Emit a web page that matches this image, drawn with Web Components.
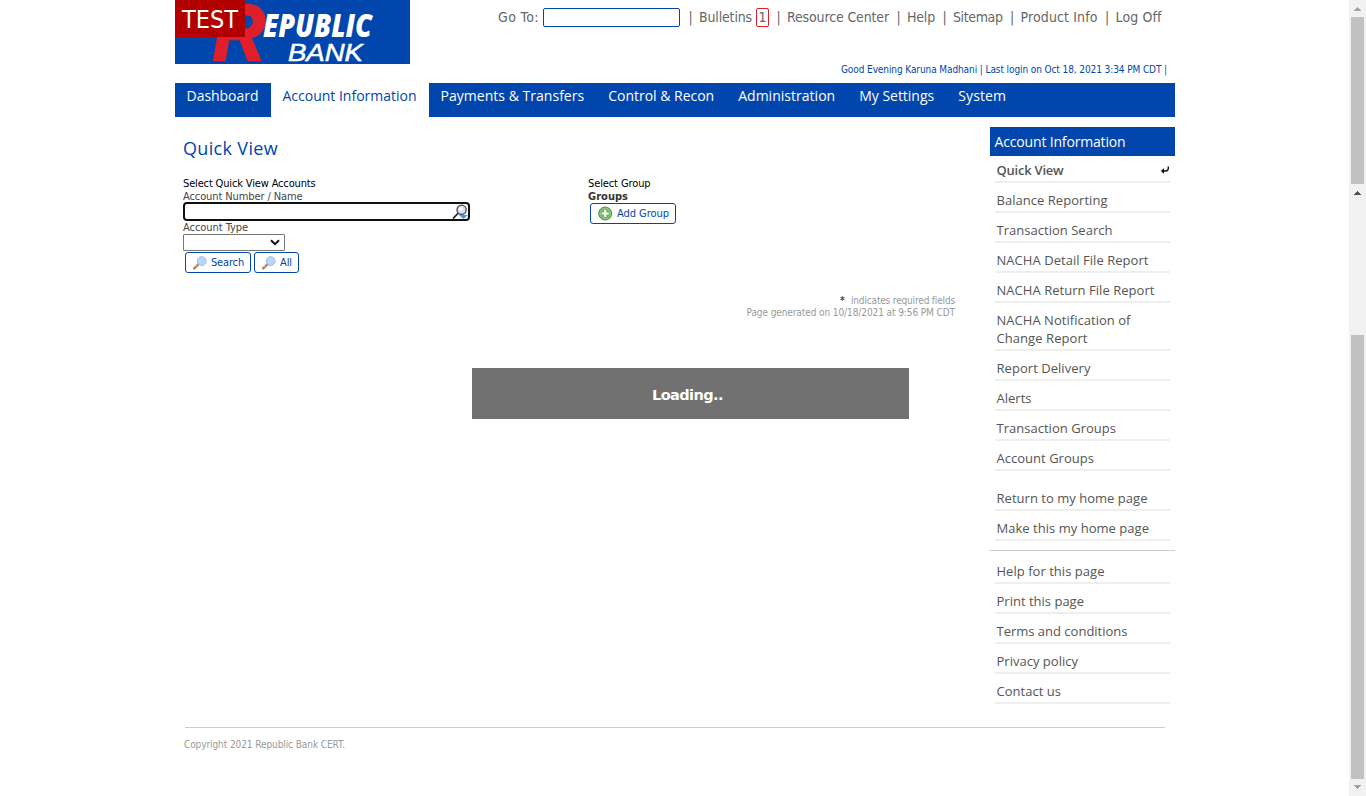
<!DOCTYPE html>
<html lang="en">
<head>
<meta charset="utf-8">
<title>Quick View</title>
<style>
html,body{margin:0;height:796px;overflow:hidden;background:#fff}
body{font-family:"DejaVu Sans Condensed","DejaVu Sans",sans-serif}
</style>
</head>
<body>
<bank-app></bank-app>
<script>
const define=(name,html,after)=>customElements.define(name,class extends HTMLElement{
  constructor(){super();this.attachShadow({mode:'open'}).innerHTML=html;}
  connectedCallback(){if(after)after(this,this.shadowRoot);}
});

/* One line of text tracked to a given width */
define('fit-text',`<style>:host{display:block;white-space:nowrap}span{display:inline-block}</style><span><slot></slot></span>`,(h,r)=>{
  const s=r.querySelector('span'),w=+h.getAttribute('w'),n=h.textContent.length;
  h.style.width=w+'px';
  s.style.letterSpacing=((w-s.getBoundingClientRect().width)/n)+'px';
});

define('bank-logo',`<style>:host{display:block;width:235px;height:64px}svg{display:block;overflow:visible}</style>
<svg width="235" height="64" viewBox="0 0 235 64">
<rect width="235" height="64" fill="#0046ad"/>
<text x="38" y="60" font-family="Liberation Sans" font-weight="bold" font-style="italic" font-size="79" fill="#e01f2b" stroke="#e01f2b" stroke-width="2.5" textLength="52" lengthAdjust="spacingAndGlyphs">R</text>
<g fill="#fff" font-style="italic">
<text x="88" y="37" font-family="Open Sans" font-weight="800" font-size="31" textLength="109" lengthAdjust="spacingAndGlyphs">EPUBLIC</text>
<text x="113" y="61" font-family="Liberation Sans" font-size="23" stroke="#fff" stroke-width=".5" textLength="75" lengthAdjust="spacingAndGlyphs">BANK</text></g>
<rect width="70" height="37" fill="#b20000"/>
<text x="7" y="28" font-family="DejaVu Sans Condensed" font-size="24" fill="#fff" textLength="56" lengthAdjust="spacingAndGlyphs">TEST</text>
</svg>`);

define('top-links',`<style>
:host{display:flex;align-items:center;height:22px;font-size:14px;line-height:22px;color:#666}
.f{box-sizing:border-box;width:137px;height:19px;border:1px solid #0046ad;border-radius:2px;margin:0 10px 0 4px}
i{width:1px;display:flex;justify-content:center;font-style:normal}
.n{box-sizing:border-box;width:13px;height:19px;border:1px solid #e01f2b;border-radius:2px;text-align:center;line-height:17px;margin:0 9px 0 4px}
.g{margin:0 9px 0 8px}
</style>
<fit-text w="41">Go To:</fit-text><div class="f"></div><i>|</i>
<fit-text w="53" style="margin-left:8px">Bulletins</fit-text><div class="n">1</div><i>|</i>
<fit-text class="g" w="102">Resource Center</fit-text><i>|</i>
<fit-text class="g" w="28">Help</fit-text><i>|</i>
<fit-text class="g" w="49.5">Sitemap</fit-text><i>|</i>
<fit-text class="g" w="77">Product Info</fit-text><i>|</i>
<fit-text class="g" w="46">Log Off</fit-text>`);

define('page-header',`<style>
:host{display:flex;height:83px;width:1000px}
.r{flex:1;display:flex;flex-direction:column}
top-links{margin:6px 0 0 88px}
.w{margin:35px 0 0 431px;font-size:10px;line-height:14px;color:#0046ad}
</style><bank-logo></bank-logo><div class="r"><top-links></top-links><div class="w"><fit-text w="326">Good Evening Karuna Madhani | Last login on Oct 18, 2021 3:34 PM CDT |</fit-text></div></div>`);

define('nav-tab',`<style>:host{display:block;box-sizing:border-box;height:34px;padding:0 12.5px 0 11.5px;font:14px/26px "Open Sans",sans-serif;color:#fff}
:host([active]){background:#fff;color:#0046ad}</style><slot></slot>`);
define('nav-bar',`<style>:host{display:flex;height:34px;background:#0046ad}</style>
<nav-tab><fit-text w="72">Dashboard</fit-text></nav-tab><nav-tab active><fit-text w="134">Account Information</fit-text></nav-tab><nav-tab><fit-text w="143.7">Payments &amp; Transfers</fit-text></nav-tab><nav-tab><fit-text w="106">Control &amp; Recon</fit-text></nav-tab><nav-tab><fit-text w="97">Administration</fit-text></nav-tab><nav-tab><fit-text w="75">My Settings</fit-text></nav-tab><nav-tab><fit-text w="48">System</fit-text></nav-tab>`);

define('ui-button',`<style>:host{display:flex;box-sizing:border-box;align-items:center;height:21px;border:1px solid #0046ad;border-radius:3px;background:#fff;color:#0046ad;font-size:11px;line-height:19px;padding:0 6px 0 7px;gap:4px}svg{display:block;flex:none}</style><span id="i"></span><slot></slot>`,(h,r)=>{
  r.getElementById('i').innerHTML=h.getAttribute('icon')==='add'
  ?'<svg width="15" height="15" viewBox="0 0 15 15"><circle cx="7.2" cy="7.5" r="6.5" fill="#6cb55c" stroke="#4b8f45"/><circle cx="7.2" cy="7.5" r="5.2" fill="none" stroke="#a5d698" stroke-width=".8"/><path d="M7.2 4v7M3.7 7.5h7" stroke="#fff" stroke-width="2.2"/></svg>'
  :'<svg width="14" height="14" viewBox="0 0 14 14"><path d="M1.2 12.3L5 8.6" stroke="#a77b52" stroke-width="2.4" stroke-linecap="round"/><path d="M1.6 11.4L4.6 8.5" stroke="#e8bd8c" stroke-width="1"/><circle cx="8.7" cy="5.1" r="4.4" fill="#b9d8f8" stroke="#9bb9e2"/></svg>';
});

define('quick-form',`<style>
:host{display:grid;grid-template-columns:405px 1fr;width:772px;color:#444;font-size:11px;line-height:13px;height:98px}
.b{color:#000}
.in{box-sizing:border-box;width:287px;height:19px;border:2px solid #101010;border-radius:4px;display:flex;justify-content:flex-end;overflow:hidden;margin-top:-1px}
.sel{box-sizing:border-box;width:102px;height:17px;border:1px solid #767676;border-radius:1px;display:flex;align-items:center;justify-content:flex-end;padding-right:4px;margin-bottom:1px}
.row{display:flex;gap:3px;margin-left:2px}
</style>
<div><fit-text class="b" w="132.5">Select Quick View Accounts</fit-text><fit-text w="119.5">Account Number / Name</fit-text>
<div class="in"><svg width="16" height="15" viewBox="0 0 16 15"><path d="M7 11h9l-4.5 4z" fill="#3b9aea"/><path d="M1 14.5L6.3 9" stroke="#222" stroke-width="1.8"/><circle cx="9.6" cy="5.8" r="4.6" fill="#dcdcf5" stroke="#45455a" stroke-width="1.3"/><circle cx="9" cy="5" r="1.8" fill="#fff"/></svg></div>
<fit-text w="65">Account Type</fit-text>
<div class="sel"><svg width="10" height="7" viewBox="0 0 10 7"><path d="M1 1.2L5 5.2L9 1.2" fill="none" stroke="#111" stroke-width="2"/></svg></div>
<div class="row"><ui-button icon="find"><fit-text w="33">Search</fit-text></ui-button><ui-button icon="find"><fit-text w="12">All</fit-text></ui-button></div></div>
<div><fit-text class="b" w="62.5">Select Group</fit-text><fit-text w="40" style="font-weight:bold;color:#333">Groups</fit-text><div class="row"><ui-button icon="add"><fit-text w="52">Add Group</fit-text></ui-button></div></div>`);

define('quick-view',`<style>
:host{display:block;width:807px;box-sizing:border-box;padding:9px 0 0 8px}
.h{font:18px/24px "Open Sans",sans-serif;color:#0046ad;margin:0 0 17px}
.q{margin-top:20px;width:772px;display:flex;flex-direction:column;align-items:flex-end;font-size:10px;line-height:12px;color:#999}
.q div{display:flex;gap:4px}
b{color:#444;width:7px}
</style>
<div class="h"><fit-text w="95">Quick View</fit-text></div><quick-form></quick-form>
<div class="q"><div><b>*</b><fit-text w="104">indicates required fields</fit-text></div><fit-text w="208.5">Page generated on 10/18/2021 at 9:56 PM CDT</fit-text></div>`);

define('side-item',`<style>:host{display:flex;justify-content:space-between;align-items:flex-start;border-bottom:2px solid #eee;margin:0 5px;padding:8px 0 2px 1.5px;font:13px/18px "Open Sans",sans-serif;color:#555}
:host([current]){padding-top:5px;font-weight:600}
svg{margin-top:4px}</style><div><slot></slot></div>`,(h,r)=>{
  if(h.hasAttribute('current'))r.innerHTML+='<svg width="10" height="10" viewBox="0 0 10 10"><path d="M0.8 6L4 3.2V5.2h2Q7.4 5 7.6 3.4V1.4h1.4V3.6Q8.8 6.6 6 6.8H4v2z" fill="#111"/></svg>';
});
define('side-menu',`<style>:host{display:block;width:185px}.h{background:#0046ad;color:#fff;height:29px;font:14px/29px "Open Sans",sans-serif;padding-left:4.5px}
.g{height:10px}hr{border:0;height:1px;background:#ccc;margin:9px 0 3px}</style>
<div class="h"><fit-text w="131">Account Information</fit-text></div>
<side-item current><fit-text w="67">Quick View</fit-text></side-item>
<side-item><fit-text w="111">Balance Reporting</fit-text></side-item>
<side-item><fit-text w="116">Transaction Search</fit-text></side-item>
<side-item><fit-text w="152">NACHA Detail File Report</fit-text></side-item>
<side-item><fit-text w="158">NACHA Return File Report</fit-text></side-item>
<side-item><fit-text w="134">NACHA Notification of</fit-text><fit-text w="91">Change Report</fit-text></side-item>
<side-item><fit-text w="94">Report Delivery</fit-text></side-item>
<side-item><fit-text w="35">Alerts</fit-text></side-item>
<side-item><fit-text w="119.5">Transaction Groups</fit-text></side-item>
<side-item><fit-text w="97.5">Account Groups</fit-text></side-item><div class="g"></div>
<side-item><fit-text w="151">Return to my home page</fit-text></side-item>
<side-item><fit-text w="152.5">Make this my home page</fit-text></side-item><hr>
<side-item><fit-text w="108">Help for this page</fit-text></side-item>
<side-item><fit-text w="87.5">Print this page</fit-text></side-item>
<side-item><fit-text w="131">Terms and conditions</fit-text></side-item>
<side-item><fit-text w="81.5">Privacy policy</fit-text></side-item>
<side-item><fit-text w="64.5">Contact us</fit-text></side-item>`);

define('page-footer',`<style>:host{display:block;margin:23px 10px 0;border-top:1px solid #ccc;padding-top:10px;font-size:10px;line-height:13px;color:#999}</style><fit-text w="161" style="margin-left:-1px">Copyright 2021 Republic Bank CERT.</fit-text>`);

define('scroll-bars',`<style>:host{display:flex;flex-direction:column;align-items:center;box-sizing:border-box;width:17px;height:796px;background:#f1f1f1;padding-top:7px}
svg{display:block;flex:none}div{width:13px;background:#c1c1c1;flex:none}</style>
<svg width="7" height="4"><path d="M3 0h1v1h1v1h1v1h1v1H0V3h1V2h1V1h1z" fill="#a3a3a3"/></svg><div style="height:167px;margin:6px 0 7px"></div>
<svg width="7" height="4"><path d="M3 0h1v1h1v1h1v1h1v1H0V3h1V2h1V1h1z" fill="#505050"/></svg><div style="height:444px;margin:140px 0 6px"></div>
<svg width="7" height="4"><path d="M0 0h7v1H6v1H5v1H4v1H3V3H2V2H1V1H0z" fill="#a3a3a3"/></svg>`);

define('loading-box',`<style>:host{position:absolute;left:472px;top:368px;width:437px;height:51px;background:#717171;color:#fff;font:bold 14.5px "DejaVu Sans",sans-serif;display:flex;align-items:center;justify-content:center;box-sizing:border-box;padding:2px 6px 0 0}</style><fit-text w="71">Loading..</fit-text>`);

define('bank-app',`<style>:host{display:flex;justify-content:space-between;position:relative;width:1366px;height:796px;overflow:hidden}
main{width:1000px;margin-left:175px}.c{display:flex;align-items:flex-start;justify-content:space-between;padding-top:10px}</style>
<main><page-header></page-header><nav-bar></nav-bar><div class="c"><quick-view></quick-view><side-menu></side-menu></div><page-footer></page-footer></main><scroll-bars></scroll-bars><loading-box></loading-box>`);
</script>
</body>
</html>
